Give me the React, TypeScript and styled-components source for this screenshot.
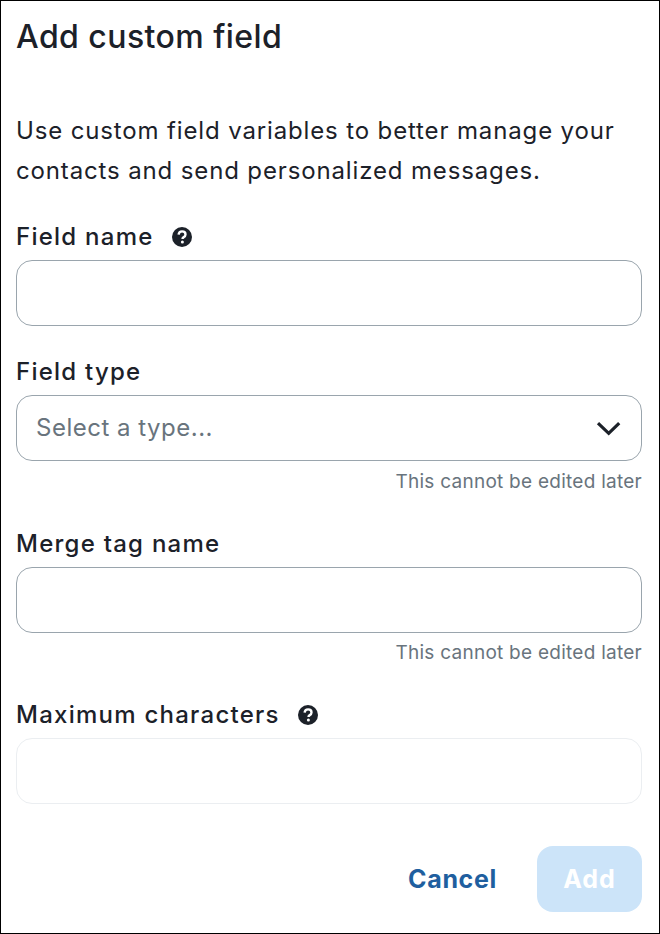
import React from 'react';
import styled, { createGlobalStyle } from 'styled-components';

const GlobalStyle = createGlobalStyle`
  html, body {
    margin: 0;
    padding: 0;
    background: #fff;
  }
  body {
    font-family: "Inter", "Liberation Sans", sans-serif;
  }
`;

const Modal = styled.div`
  box-sizing: border-box;
  width: 660px;
  height: 934px;
  border: 1px solid #000;
  padding: 15px 17px 0 15px;
  background: #fff;
  color: #1c2129;
`;

const Title = styled.h2`
  margin: 0;
  font-size: 32px;
  line-height: 42px;
  font-weight: 500;
  letter-spacing: 0.44px;
`;

const Intro = styled.p`
  margin: 53px 0 29px;
  font-size: 24px;
  line-height: 40px;
  font-weight: 400;
  letter-spacing: 0.86px;
`;

const Field = styled.div`
  margin-bottom: 29px;
`;

const LabelRow = styled.div`
  display: flex;
  align-items: center;
  gap: 18px;
  height: 30px;
  padding-top: 2px;
  margin-bottom: 8px;
`;

const Label = styled.label`
  font-size: 24px;
  line-height: 30px;
  font-weight: 500;
  letter-spacing: 1.25px;
`;

const HelpIcon = styled.svg`
  width: 20px;
  height: 20px;
  flex: none;
  color: #1c2129;
`;

const Input = styled.input<{ $disabled?: boolean }>`
  display: block;
  box-sizing: border-box;
  width: 100%;
  height: 66px;
  padding: 0 19px;
  border: 1px solid ${({ $disabled }) => ($disabled ? '#ebeef1' : '#9aa5ad')};
  border-radius: 16px;
  background: #fff;
  outline: none;
  font: inherit;
`;

const SelectBox = styled.div`
  display: flex;
  align-items: center;
  justify-content: space-between;
  box-sizing: border-box;
  height: 66px;
  padding: 0 19px;
  border: 1px solid #9aa5ad;
  border-radius: 16px;
`;

const Placeholder = styled.span`
  font-size: 24px;
  letter-spacing: 0.5px;
  padding-bottom: 2px;
  color: #69747d;
`;

const Chevron = styled.svg`
  width: 26px;
  height: 16px;
  flex: none;
`;

const Hint = styled.div`
  margin: 7.5px 0 -26px;
  height: 26px;
  text-align: right;
  font-size: 19px;
  line-height: 26px;
  letter-spacing: 0.26px;
  color: #69747d;
`;

const HintSpacer = styled.div`
  height: 29px;
`;

const Actions = styled.div`
  display: flex;
  justify-content: flex-end;
  align-items: center;
  gap: 40px;
  margin-top: 42px;
`;

const CancelButton = styled.button`
  padding: 0;
  border: none;
  background: none;
  font-family: inherit;
  font-size: 25px;
  font-weight: 700;
  letter-spacing: 0.67px;
  color: #1f5f9f;
`;

const AddButton = styled.button`
  width: 105px;
  height: 66px;
  border: none;
  border-radius: 16px;
  background: #cce4f9;
  color: #fff;
  font-family: inherit;
  font-size: 25px;
  font-weight: 700;
  letter-spacing: 1px;
`;

const Help = () => (
  <HelpIcon viewBox="0 0 20 20" aria-hidden="true">
    <circle cx="10" cy="10" r="10" fill="currentColor" />
    <path
      d="M6.6 7.6C6.8 5.7 8.2 4.4 10.1 4.4c2 0 3.4 1.3 3.4 3 0 1.4-.8 2.1-1.8 2.7-.8.5-1.2 1-1.2 1.9"
      fill="none"
      stroke="#fff"
      strokeWidth="2.4"
    />
    <circle cx="10.4" cy="15" r="1.5" fill="#fff" />
  </HelpIcon>
);

const App = () => (
  <>
    <GlobalStyle />
    <Modal>
      <Title>Add custom field</Title>
      <Intro>
        Use custom field variables to better manage your
        <br />
        contacts and send personalized messages.
      </Intro>

      <Field>
        <LabelRow>
          <Label>Field name</Label>
          <Help />
        </LabelRow>
        <Input />
      </Field>

      <Field>
        <LabelRow>
          <Label>Field type</Label>
        </LabelRow>
        <SelectBox>
          <Placeholder>Select a type...</Placeholder>
          <Chevron viewBox="0 0 26 16" aria-hidden="true">
            <path d="M2 3.2l10.7 10.2L23.2 3.2" fill="none" stroke="#1c2129" strokeWidth="3.2" />
          </Chevron>
        </SelectBox>
        <Hint>This cannot be edited later</Hint>
        <HintSpacer />
      </Field>

      <Field>
        <LabelRow>
          <Label>Merge tag name</Label>
        </LabelRow>
        <Input />
        <Hint>This cannot be edited later</Hint>
        <HintSpacer />
      </Field>

      <Field>
        <LabelRow>
          <Label>Maximum characters</Label>
          <Help />
        </LabelRow>
        <Input $disabled disabled />
      </Field>

      <Actions>
        <CancelButton>Cancel</CancelButton>
        <AddButton disabled>Add</AddButton>
      </Actions>
    </Modal>
  </>
);

export default App;
